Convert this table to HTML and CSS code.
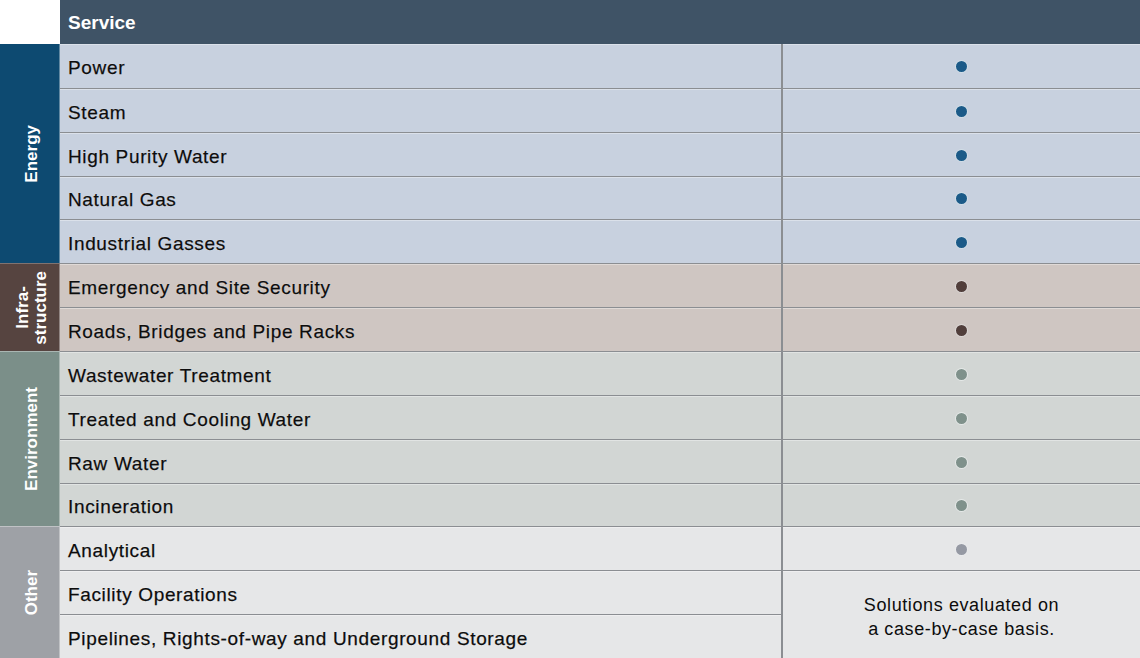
FILE: index.html
```html
<!DOCTYPE html>
<html>
<head>
<meta charset="utf-8">
<link rel="stylesheet" href="styles.css">
</head>
<body>
<div class="table">
  <div class="corner"></div>
  <div class="head">Service</div>

  <div class="cat energy span5"><span>Energy</span></div>
  <div class="name energy-bg first">Power</div><div class="mark energy-bg first"><i class="dot d-energy"></i></div>
  <div class="name energy-bg">Steam</div><div class="mark energy-bg"><i class="dot d-energy"></i></div>
  <div class="name energy-bg">High Purity Water</div><div class="mark energy-bg"><i class="dot d-energy"></i></div>
  <div class="name energy-bg">Natural Gas</div><div class="mark energy-bg"><i class="dot d-energy"></i></div>
  <div class="name energy-bg">Industrial Gasses</div><div class="mark energy-bg"><i class="dot d-energy"></i></div>

  <div class="cat infra span2"><span>Infra-<br>structure</span></div>
  <div class="name infra-bg">Emergency and Site Security</div><div class="mark infra-bg"><i class="dot d-infra"></i></div>
  <div class="name infra-bg">Roads, Bridges and Pipe Racks</div><div class="mark infra-bg"><i class="dot d-infra"></i></div>

  <div class="cat env span4"><span>Environment</span></div>
  <div class="name env-bg">Wastewater Treatment</div><div class="mark env-bg"><i class="dot d-env"></i></div>
  <div class="name env-bg">Treated and Cooling Water</div><div class="mark env-bg"><i class="dot d-env"></i></div>
  <div class="name env-bg">Raw Water</div><div class="mark env-bg"><i class="dot d-env"></i></div>
  <div class="name env-bg">Incineration</div><div class="mark env-bg"><i class="dot d-env"></i></div>

  <div class="cat other span3"><span>Other</span></div>
  <div class="name other-bg">Analytical</div><div class="mark other-bg"><i class="dot d-other"></i></div>
  <div class="name other-bg">Facility Operations</div><div class="mark other-bg note span2">Solutions evaluated on<br>a case-by-case basis.</div>
  <div class="name other-bg">Pipelines, Rights-of-way and Underground Storage</div>
</div>
</body>
</html>
```

FILE: styles.css
```css
html, body {
  margin: 0;
  padding: 0;
  background: #ffffff;
}

.table {
  width: 1140px;
  height: 658px;
  display: grid;
  grid-template-columns: 60px 721px 359px;
  grid-template-rows: 44px repeat(14, 1fr);
  font-family: "Liberation Sans", Arial, sans-serif;
  color: #0c0c0c;
}

.corner {
  background: #ffffff;
}

.head {
  grid-column: 2 / span 2;
  background: #3f5366;
  color: #ffffff;
  font-weight: bold;
  font-size: 19px;
  display: flex;
  align-items: center;
  padding-left: 8px;
  padding-top: 1px;
}

.cat {
  display: flex;
  align-items: center;
  justify-content: center;
  color: #ffffff;
  font-weight: bold;
  font-size: 17px;
  line-height: 18px;
  padding-left: 4px;
  border-right: 1px solid rgba(255,255,255,0.35);
}

.cat span {
  writing-mode: vertical-rl;
  transform: rotate(180deg);
  text-align: center;
}

.span5 { grid-row: span 5; }
.span4 { grid-row: span 4; }
.span3 { grid-row: span 3; }
.span2 { grid-row: span 2; }

.energy { background: #0d4a71; }
.infra { background: #564440; border-top: 1px solid rgba(255,255,255,0.25); }
.env { background: #7b8f89; border-top: 1px solid rgba(255,255,255,0.35); }
.other { background: #9ea1a6; border-top: 1px solid rgba(255,255,255,0.35); }

.name, .mark {
  border-top: 1px solid #8b8e92;
  box-shadow: inset 0 1px 0 rgba(255,255,255,0.35);
  display: flex;
  align-items: center;
}

.name {
  font-size: 19px;
  letter-spacing: 0.65px;
  padding-left: 8px;
  padding-top: 5px;
  -webkit-text-stroke: 0.25px #0c0c0c;
  text-shadow: 0 0 1px rgba(255,255,255,0.7);
}

.mark {
  justify-content: center;
  border-left: 2px solid #8b8e92;
}

.first {
  border-top: none;
}

.energy-bg { background: #c8d1df; }
.infra-bg { background: #cfc6c2; }
.env-bg { background: #d2d6d4; }
.other-bg { background: #e6e7e8; }

.dot {
  display: block;
  width: 11px;
  height: 11px;
  border-radius: 50%;
  border: 1px solid rgba(255,255,255,0.8);
  margin-top: 2px;
}

.d-energy { background: #1b5a88; }
.d-infra { background: #513e3b; }
.d-env { background: #7f918b; }
.d-other { background: #9599a3; }

.note {
  font-size: 18px;
  letter-spacing: 0.6px;
  line-height: 24px;
  text-align: center;
  padding-top: 5px;
}
```
